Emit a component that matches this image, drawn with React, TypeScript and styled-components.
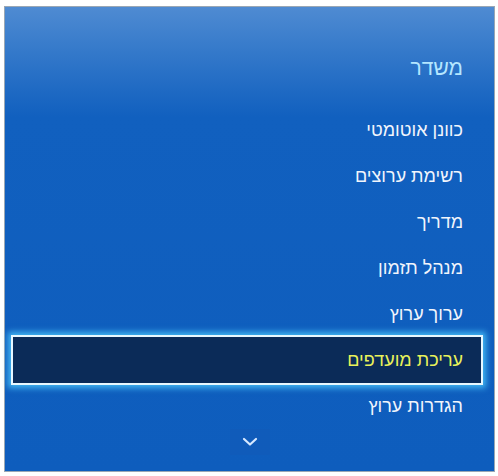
import React from 'react';
import styled, { createGlobalStyle } from 'styled-components';

const GlobalStyle = createGlobalStyle`
  html, body {
    margin: 0;
    padding: 0;
    background: #ffffff;
  }
  body {
    font-family: "Liberation Sans", "DejaVu Sans", Arial, sans-serif;
  }
`;

const Page = styled.div`
  padding: 6px 3px 4px 4px;
`;

const Panel = styled.div`
  width: 491px;
  height: 466px;
  box-sizing: border-box;
  border: 1px solid #9aa7b4;
  background: linear-gradient(
    to bottom,
    #4f8bd2 0px,
    #3479ca 45px,
    #1e69c3 85px,
    #1160bf 110px,
    #0e5dbd 100%
  );
  direction: rtl;
  display: flex;
  flex-direction: column;
`;

const Header = styled.div`
  height: 100px;
  box-sizing: border-box;
  padding: 49px 31px 0 0;
`;

const Title = styled.div`
  font-size: 21px;
  line-height: 24px;
  color: #b4e6ff;
`;

const List = styled.ul`
  list-style: none;
  margin: 0;
  padding: 0 13px 0 8px;
`;

const Row = styled.li<{ $selected?: boolean }>`
  height: 46px;
  display: flex;
  align-items: center;
  padding-right: 18px;
  font-size: 18px;
  color: ${p => (p.$selected ? '#e9f25a' : '#f1f5fc')};
  background: ${p => (p.$selected ? '#0b2b58' : 'transparent')};
  box-shadow: ${p =>
    p.$selected
      ? '0 0 0 2px #e8f8ff, 0 0 6px 5px rgba(80, 205, 255, 0.8)'
      : 'none'};
  position: relative;
`;

const More = styled.div`
  height: 26px;
  display: flex;
  align-items: center;
  justify-content: center;
`;

const ChevronBox = styled.div`
  width: 40px;
  height: 26px;
  display: flex;
  align-items: center;
  justify-content: center;
  background: rgba(20, 90, 180, 0.35);
`;

const items = [
  'כוונן אוטומטי',
  'רשימת ערוצים',
  'מדריך',
  'מנהל תזמון',
  'ערוך ערוץ',
  'עריכת מועדפים',
  'הגדרות ערוץ',
];

export default function App() {
  return (
    <>
      <GlobalStyle />
      <Page>
        <Panel>
          <Header>
            <Title>משדר</Title>
          </Header>
          <List>
            {items.map((t, i) => (
              <Row key={t} $selected={i === 5}>
                {t}
              </Row>
            ))}
          </List>
          <More>
            <ChevronBox>
              <svg width="16" height="10" viewBox="0 0 16 10">
                <path
                  d="M2 2 L8 7.5 L14 2"
                  fill="none"
                  stroke="#d6e8ff"
                  strokeWidth="2.2"
                  strokeLinecap="round"
                  strokeLinejoin="round"
                />
              </svg>
            </ChevronBox>
          </More>
        </Panel>
      </Page>
    </>
  );
}
